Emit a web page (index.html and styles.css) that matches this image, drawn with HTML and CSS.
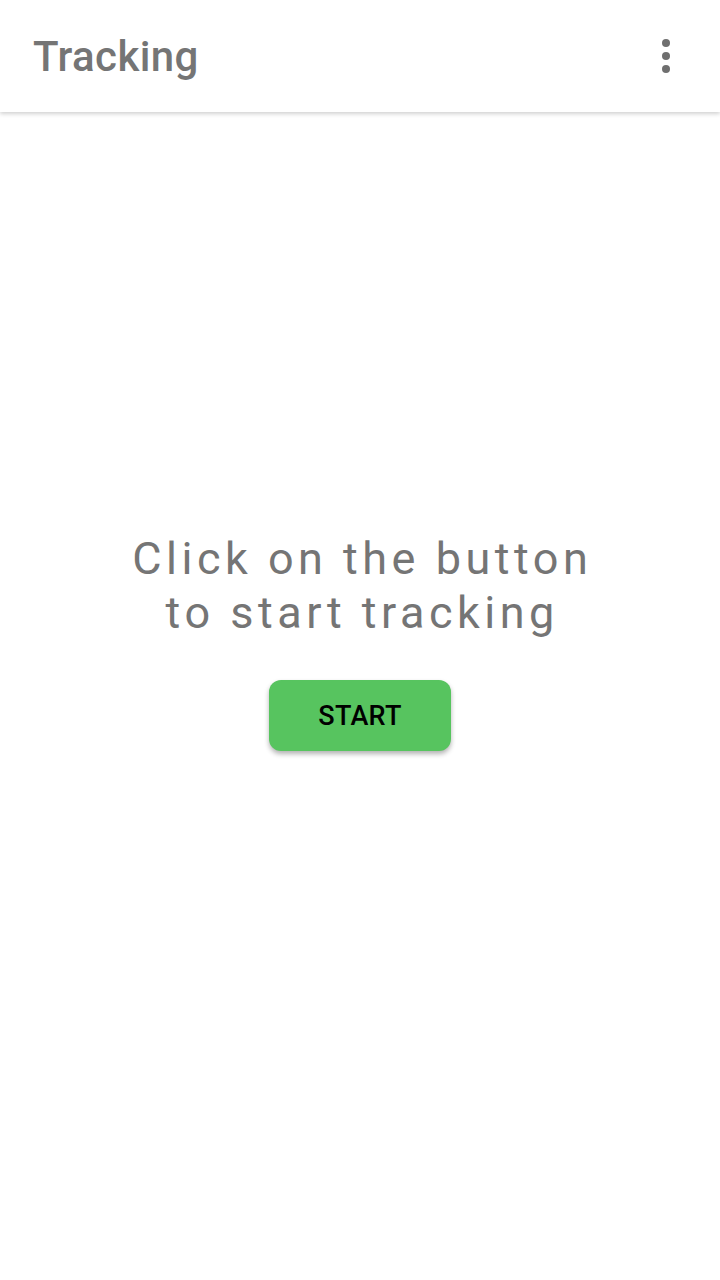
FILE: index.html
```html
<!DOCTYPE html>
<html>
<head>
<meta charset="utf-8">
<link rel="stylesheet" href="styles.css">
</head>
<body>
<header class="appbar">
  <h1 class="title">Tracking</h1>
  <button class="menu" aria-label="More options">
    <svg width="8" height="34" viewBox="0 0 8 34"><circle cx="4" cy="4" r="4"/><circle cx="4" cy="17" r="4"/><circle cx="4" cy="30" r="4"/></svg>
  </button>
</header>
<main class="content">
  <p class="message">Click on the button<br>to start tracking</p>
  <button class="start">START</button>
</main>
</body>
</html>
```
FILE: styles.css
```css
* { box-sizing: border-box; }
html, body { margin: 0; padding: 0; background: #fff; }
body { font-family: Roboto, "Noto Sans", sans-serif; width: 720px; height: 1280px; overflow: hidden; }
.appbar {
  height: 112px;
  display: flex;
  align-items: center;
  justify-content: space-between;
  padding: 0 33px 0 33px;
  background: #fff;
  box-shadow: 0 2px 4px rgba(0,0,0,0.18);
  position: relative;
  z-index: 1;
}
.title { margin: 0; font-size: 42px; font-weight: 500; color: #757575; letter-spacing: 0.4px; }
.menu { border: 0; background: none; padding: 0; margin-right: 17px; display: flex; fill: #6f6f6f; }
.content {
  height: 1168px;
  display: flex;
  flex-direction: column;
  align-items: center;
  padding-top: 420px;
}
.message {
  margin: 0;
  padding-left: 4.5px;
  text-align: center;
  font-size: 45px;
  line-height: 54px;
  letter-spacing: 4.5px;
  color: #757575;
  font-weight: 400;
}
.start {
  margin-top: 40px;
  width: 182px;
  height: 71px;
  border: 0;
  border-radius: 12px;
  background: #57c45f;
  font-family: Roboto, sans-serif;
  font-size: 27px;
  font-weight: 500;
  letter-spacing: 0.3px;
  color: #000;
  box-shadow: 0 3px 5px rgba(0,0,0,0.3);
}
```
